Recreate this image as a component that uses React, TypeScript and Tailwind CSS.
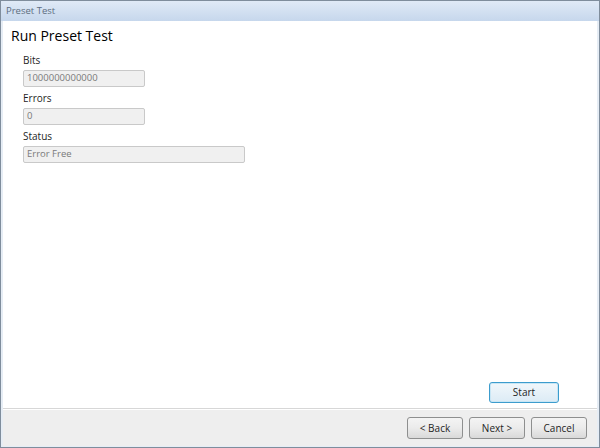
import React from "react";

// Read-only wizard field: small label over a greyed-out box.
function Field({ label, value, width }: { label: string; value: string; width: string }) {
  return (
    <div className="flex flex-col">
      <div className="h-[12px] text-[10px] leading-[12px] text-[#1e1e1e]">{label}</div>
      <div
        className={`mt-[4px] flex h-[17px] items-center rounded-[2px] border border-[#c9c9c9] bg-[#f0f0f0] px-[3px] text-[9.5px] text-[#7a7a7a] ${width}`}
      >
        {value}
      </div>
    </div>
  );
}

function WizardButton({ children }: { children: React.ReactNode }) {
  return (
    <button className="flex h-[22px] w-[56px] items-center justify-center rounded-[3px] border border-[#8e8f8f] bg-gradient-to-b from-[#f4f4f4] via-[#ebebeb] to-[#d9d9d9] text-[10px] text-[#1e1e1e]">
      {children}
    </button>
  );
}

export default function App() {
  return (
    <div className="flex h-[448px] w-[600px] flex-col overflow-hidden border border-[#7f8d9c] bg-[#dfe8f2] font-['Open_Sans',sans-serif]">
      <div className="flex h-[20px] shrink-0 items-center bg-gradient-to-b from-[#e0eaf6] to-[#c6d7ec] pl-[5px] text-[9.5px] text-[#5d6d7f]">
        Preset Test
      </div>

      <div className="flex flex-1 flex-col border-x-2 border-b border-x-[#e6edf5] border-b-[#e6edf5]">
        <div className="flex flex-1 flex-col bg-white">
          <div className="pl-[8px] pt-[5px] text-[14px] leading-[20px] text-black">Run Preset Test</div>
          <div className="mt-[8px] flex flex-col gap-[5px] pl-[20px]">
            <Field label="Bits" value="1000000000000" width="w-[122px]" />
            <Field label="Errors" value="0" width="w-[122px]" />
            <Field label="Status" value="Error Free" width="w-[222px]" />
          </div>
          <div className="mt-auto flex justify-end pb-[5px] pr-[38px]">
            <button className="flex h-[21px] w-[70px] items-center justify-center rounded-[3px] border border-[#3c9ccd] bg-gradient-to-b from-[#f1f7fb] to-[#dcebf5] text-[10px] text-[#1e1e1e] shadow-[inset_0_0_0_1px_#c8e6f5]">
              Start
            </button>
          </div>
        </div>
        <div className="h-[1px] bg-[#d7d7d7]" />
        <div className="flex h-[37px] items-center justify-end gap-[6px] border-t border-white bg-[#eeeeee] pr-[10px]">
          <WizardButton>&lt; Back</WizardButton>
          <WizardButton>Next &gt;</WizardButton>
          <WizardButton>Cancel</WizardButton>
        </div>
      </div>
    </div>
  );
}
